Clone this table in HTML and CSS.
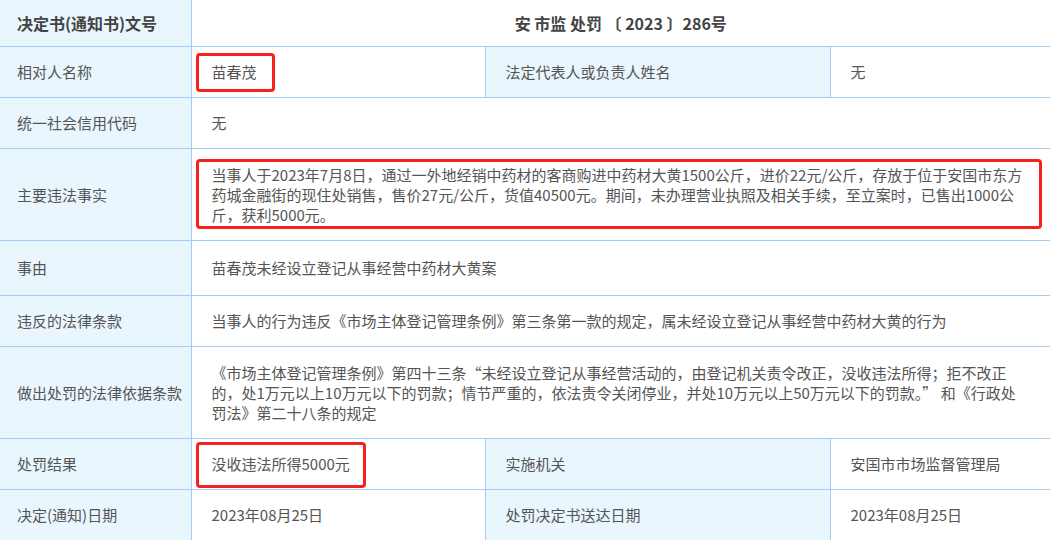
FILE: index.html
```html
<!DOCTYPE html>
<html lang="zh-CN">
<head>
    <meta charset="UTF-8">
    <meta name="viewport" content="width=device-width, initial-scale=1.0">
    <title>行政处罚决定书</title>
    <link rel="stylesheet" href="styles.css">
</head>
<body>
    <table class="info">
        <colgroup>
            <col class="c1">
            <col class="c2">
            <col class="c3">
            <col class="c4">
        </colgroup>
        <tr class="head">
            <th class="label">决定书(通知书)文号</th>
            <th colspan="3" class="doc-no">安 市监 处罚 〔 2023 〕286号</th>
        </tr>
        <tr>
            <td class="label">相对人名称</td>
            <td><span class="mark mark-name">苗春茂</span></td>
            <td class="label">法定代表人或负责人姓名</td>
            <td>无</td>
        </tr>
        <tr>
            <td class="label">统一社会信用代码</td>
            <td colspan="3">无</td>
        </tr>
        <tr class="tall">
            <td class="label">主要违法事实</td>
            <td colspan="3"><div class="mark mark-fact">当事人于2023年7月8日，通过一外地经销中药材的客商购进中药材大黄1500公斤，进价22元/公斤，存放于位于安国市东方药城金融街的现住处销售，售价27元/公斤，货值40500元。期间，未办理营业执照及相关手续，至立案时，已售出1000公斤，获利5000元。</div></td>
        </tr>
        <tr class="mid">
            <td class="label">事由</td>
            <td colspan="3">苗春茂未经设立登记从事经营中药材大黄案</td>
        </tr>
        <tr>
            <td class="label">违反的法律条款</td>
            <td colspan="3">当事人的行为违反《市场主体登记管理条例》第三条第一款的规定，属未经设立登记从事经营中药材大黄的行为</td>
        </tr>
        <tr class="tall">
            <td class="label">做出处罚的法律依据条款</td>
            <td colspan="3">《市场主体登记管理条例》第四十三条“未经设立登记从事经营活动的，由登记机关责令改正，没收违法所得；拒不改正的，处1万元以上10万元以下的罚款；情节严重的，依法责令关闭停业，并处10万元以上50万元以下的罚款。” 和《行政处罚法》第二十八条的规定</td>
        </tr>
        <tr>
            <td class="label">处罚结果</td>
            <td><span class="mark mark-result">没收违法所得5000元</span></td>
            <td class="label">实施机关</td>
            <td>安国市市场监督管理局</td>
        </tr>
        <tr>
            <td class="label">决定(通知)日期</td>
            <td>2023年08月25日</td>
            <td class="label">处罚决定书送达日期</td>
            <td>2023年08月25日</td>
        </tr>
    </table>
</body>
</html>
```

FILE: styles.css
```css
body {
    margin: 0;
    background: #fff;
    font-family: "Microsoft YaHei", "Noto Sans CJK SC", "Noto Sans", sans-serif;
    font-size: 15px;
    color: #555;
    overflow: hidden;
}
.info {
    width: 1050px;
    table-layout: fixed;
    border-collapse: collapse;
    border-style: hidden;
}
.c1 { width: 191px; }
.c2 { width: 294px; }
.c3 { width: 345px; }
.c4 { width: 220px; }
.info th,
.info td {
    border: 1px solid #a3cdf7;
    padding: 15px 20px;
    line-height: 20px;
    text-align: left;
    vertical-align: middle;
    font-weight: normal;
}
.info .label {
    background: #eaf6fe;
}
.info tr > .label:first-child {
    padding-left: 17px;
    padding-right: 4px;
    white-space: nowrap;
}
.head th {
    padding-top: 13px;
    padding-bottom: 13px;
    font-size: 16px;
    font-weight: bold;
    color: #444;
}
.head .doc-no {
    text-align: center;
}
.info .tall td {
    padding-top: 16px;
    padding-bottom: 15px;
}
.info .mid td {
    padding-top: 17px;
    padding-bottom: 17px;
}
.mark {
    border: 3px solid #f5221b;
    border-radius: 4px;
}
.mark-name {
    display: inline-block;
    padding: 6px 15px 7px 13px;
    margin: -9px 0 -10px -16px;
}
.mark-fact {
    padding: 3px 9px 1px 13px;
    margin: -6px -12px -4px -16px;
}
.mark-result {
    display: inline-block;
    padding: 9px 13px 11px 13px;
    margin: -12px 0 -14px -16px;
}
```
